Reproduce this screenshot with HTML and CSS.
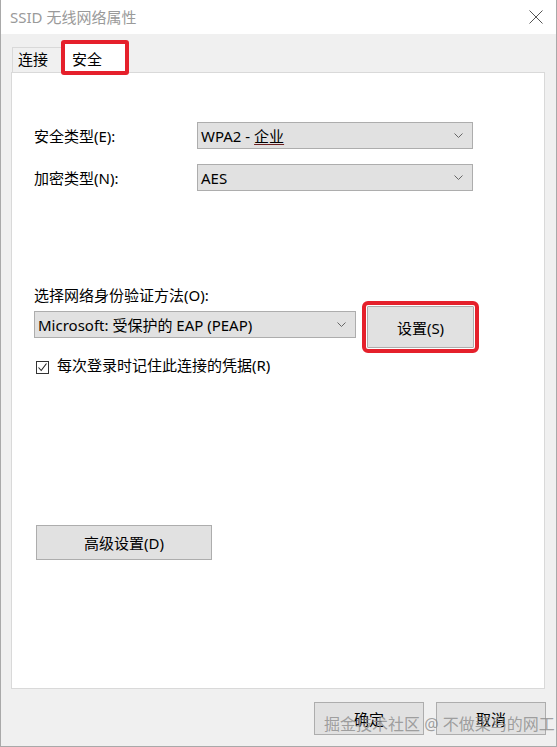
FILE: index.html
```html
<!DOCTYPE html>
<html lang="zh-CN">
<head>
<meta charset="utf-8">
<title>SSID 无线网络属性</title>
<link rel="stylesheet" href="styles.css">
</head>
<body>
<div class="window">
  <div class="titlebar">
    <span class="title">SSID 无线网络属性</span>
    <svg class="close" width="14" height="14" viewBox="0 0 14 14"><path d="M0.5 0.5 L13.5 13.5 M13.5 0.5 L0.5 13.5" stroke="#555" stroke-width="1" fill="none"/></svg>
  </div>
  <div class="body">
    <div class="tabs">
      <div class="tab">连接</div>
      <div class="tab active">安全</div>
    </div>
    <div class="panel">
      <div class="row first">
        <span class="label">安全类型(E):</span>
        <div class="select wide"><span>WPA2 - <u>企业</u></span><svg class="chev" width="9" height="5" viewBox="0 0 9 5"><path d="M0.5 0.5 L4.5 4.5 L8.5 0.5" stroke="#666" fill="none"/></svg></div>
      </div>
      <div class="row second">
        <span class="label">加密类型(N):</span>
        <div class="select wide"><span>AES</span><svg class="chev" width="9" height="5" viewBox="0 0 9 5"><path d="M0.5 0.5 L4.5 4.5 L8.5 0.5" stroke="#666" fill="none"/></svg></div>
      </div>
      <div class="auth-label">选择网络身份验证方法(O):</div>
      <div class="auth-row">
        <div class="select auth"><span>Microsoft: 受保护的 EAP (PEAP)</span><svg class="chev" width="9" height="5" viewBox="0 0 9 5"><path d="M0.5 0.5 L4.5 4.5 L8.5 0.5" stroke="#666" fill="none"/></svg></div>
        <div class="btn settings">设置(S)</div>
      </div>
      <div class="check-row">
        <span class="checkbox"><svg width="11" height="11" viewBox="0 0 11 11"><path d="M1.5 5.5 L4.2 8.5 L9.5 1.5" stroke="#222" stroke-width="1.1" fill="none"/></svg></span>
        <span>每次登录时记住此连接的凭据(R)</span>
      </div>
      <div class="btn advanced">高级设置(D)</div>
    </div>
    <div class="footer">
      <div class="btn foot">确定</div>
      <div class="btn foot">取消</div>
    </div>
  </div>
  <div class="watermark">掘金技术社区 @ 不做菜鸟的网工</div>
</div>
</body>
</html>
```
FILE: styles.css
```css
*, *::before, *::after {
  box-sizing: border-box;
}
html, body {
  margin: 0;
  padding: 0;
  background: #ffffff;
}
body {
  font-family: "Noto Sans", "Noto Sans CJK SC", sans-serif;
  font-size: 15px;
  color: #000;
}
.window {
  position: relative;
  width: 557px;
  height: 747px;
  border-left: 1px solid #a9a9a9;
  border-right: 1px solid #a9a9a9;
  border-bottom: 1px solid #a9a9a9;
  display: flex;
  flex-direction: column;
  background: #f0f0f0;
  overflow: hidden;
}
.titlebar {
  height: 34px;
  flex: none;
  background: #ffffff;
  display: flex;
  align-items: center;
  justify-content: space-between;
  padding: 0 13px 2px 9px;
}
.title {
  color: #9a9a9a;
  font-size: 15px;
}
.close {
  margin-top: 1px;
}
.body {
  flex: 1;
  display: flex;
  flex-direction: column;
  padding: 6px 10px 0 10px;
}
.tabs {
  height: 32px;
  flex: none;
  display: flex;
  align-items: flex-end;
  padding-left: 1px;
}
.tab {
  height: 25px;
  width: 50px;
  border: 1px solid #d9d9d9;
  border-bottom: none;
  padding-left: 5px;
  line-height: 23px;
  background: #f0f0f0;
}
.tab.active {
  height: 35px;
  width: 68px;
  margin-bottom: -3px;
  margin-left: -1px;
  background: #ffffff;
  border: 4px solid #e5202b;
  border-radius: 3px;
  padding-left: 7px;
  line-height: 30px;
  position: relative;
  z-index: 1;
}
.panel {
  height: 617px;
  flex: none;
  border: 1px solid #d9d9d9;
  background: #ffffff;
  margin-right: 1px;
  padding: 0 0 0 22px;
  display: flex;
  flex-direction: column;
  align-items: flex-start;
}
.row {
  display: flex;
  align-items: center;
  height: 27px;
}
.row.first { margin-top: 49px; }
.row.second { margin-top: 15px; }
.label {
  width: 163px;
}
.select {
  height: 27px;
  background: #e1e1e1;
  border: 1px solid #adadad;
  display: flex;
  align-items: center;
  justify-content: space-between;
  padding: 0 9px 0 3px;
}
.select u {
  text-decoration-color: #6b1f1f;
  text-underline-offset: 2px;
}
.select.wide { width: 276px; }
.chev { flex: none; }
.auth-label {
  margin-top: 94px;
  line-height: 21px;
}
.auth-row {
  display: flex;
  align-items: flex-start;
  gap: 11px;
}
.select.auth {
  width: 322px;
  margin-top: 5px;
}
.btn {
  background: #e1e1e1;
  border: 1px solid #adadad;
  display: flex;
  align-items: center;
  justify-content: center;
}
.settings {
  width: 107px;
  height: 42px;
  outline: 4px solid #e5202b;
  outline-offset: 1px;
  border-radius: 1px;
}
.check-row {
  display: flex;
  align-items: center;
  gap: 8px;
  margin-top: 7px;
  margin-left: 2px;
  line-height: 18px;
}
.checkbox {
  width: 13px;
  height: 13px;
  border: 1px solid #333;
  background: #fff;
  display: flex;
  align-items: center;
  justify-content: center;
  margin-top: 6px;
}
.advanced {
  width: 176px;
  height: 35px;
  margin-top: 151px;
  margin-left: 2px;
}
.footer {
  display: flex;
  justify-content: flex-end;
  gap: 12px;
  margin-top: 13px;
}
.foot {
  width: 110px;
  height: 33px;
}
.watermark {
  position: absolute;
  left: 323px;
  top: 711px;
  font-size: 16px;
  color: rgba(140, 140, 140, 0.8);
  white-space: nowrap;
  pointer-events: none;
}
```
